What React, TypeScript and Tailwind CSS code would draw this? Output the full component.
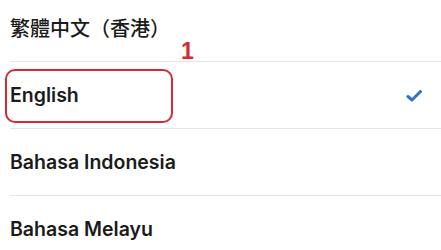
import { useState } from "react";

const languages = ["繁體中文（香港）", "English", "Bahasa Indonesia", "Bahasa Melayu"];

export default function App() {
  const [selected, setSelected] = useState("English");

  return (
    <div
      className="relative h-[250px] w-[441px] overflow-hidden bg-white"
      style={{ fontFamily: 'Inter, "Noto Sans CJK TC", sans-serif' }}
    >
      <div className="-mt-[5px] flex flex-col">
        {languages.map((lang, i) => (
          <div key={lang} className="flex flex-col">
            <button
              onClick={() => setSelected(lang)}
              className="relative flex h-[66px] items-center justify-between pl-[10px] pr-[19px] pt-[2px] text-left"
            >
              <span
                className={
                  i === 0
                    ? "text-[20px] font-medium text-[#1b1b1b]"
                    : "text-[19.5px] font-semibold text-[#1b1b1b]"
                }
              >
                {lang}
              </span>
              {selected === lang && (
                <svg width="16" height="12" viewBox="0 0 16 12" fill="none">
                  <path
                    d="M2 6.5 L6 10 L14.5 1.5"
                    stroke="#2e72d2"
                    strokeWidth="3"
                    strokeLinecap="round"
                    strokeLinejoin="round"
                  />
                </svg>
              )}
              {lang === "English" && (
                <div className="absolute left-[5px] top-[7px] h-[54px] w-[168px] rounded-[10px] border-2 border-[#d42a35]" />
              )}
            </button>
            {i < languages.length - 1 && <div className="ml-[10px] h-px bg-[#e6e6e6]" />}
          </div>
        ))}
      </div>
      <span
        className="absolute left-[181px] top-[38px] text-[23px] leading-[26px] font-bold text-[#d42a35]"
        style={{ fontFamily: '"Liberation Sans", sans-serif' }}
      >
        1
      </span>
    </div>
  );
}
